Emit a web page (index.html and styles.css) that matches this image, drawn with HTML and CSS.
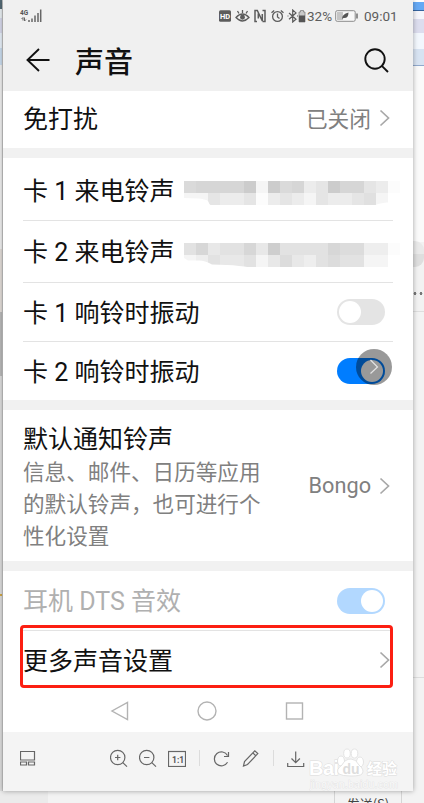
FILE: index.html
```html
<!DOCTYPE html>
<html lang="zh-CN">
<head>
  <meta charset="UTF-8">
  <meta name="viewport" content="width=device-width, initial-scale=1.0">
  <title>声音</title>
  <link rel="stylesheet" href="styles.css">
</head>

<body>
  <div class="desktop">
    <div class="desk-left"></div>

    <div class="viewer">
      <div class="top">
        <div class="status">
          <svg class="signal" width="24" height="14" viewBox="0 0 24 14">
            <text x="2" y="5.500" class="net">4G</text>
            <path d="M5 11.500V8.500L3.500 10M6.500 8.500v3.500L8 10.500" fill="none" stroke="#666" stroke-width="1"/>
            <path d="M11 11v2M14 9.500v3.500M17 6.500v6.500M20 4v9M22.700 .5v12.500" stroke="#666" stroke-width="1.500"/>
          </svg>
          <svg class="icons" width="88" height="14" viewBox="0 0 88 14">
            <rect x="1" y="1.300" width="12" height="11.500" rx="1.500" fill="#5c5c5c"/>
            <text x="2" y="9.800" class="hd">HD</text>
            <g fill="none" stroke="#5c5c5c" stroke-width="1.300">
              <path d="M18 8.500Q24.500 1.500 31 8.500Q24.500 15.500 18 8.500ZM24.500 1v3M19.500 2l1.500 2.500M29.500 2L28 4.500"/>
              <circle cx="24.500" cy="8.300" r="1.800" fill="#5c5c5c"/>
              <path d="M39 12.500h-2V1.500h2.300l5 10.500V5M40.300 9.500V4.500M44.500 1.500h2.500v11h-2.500" stroke-width="1.500"/>
              <circle cx="59.500" cy="7.500" r="4.900"/>
              <path d="M59.500 4.500v3.500l2 1.500M53.500 3.700l2.700-2.300M65.500 3.700l-2.700-2.300"/>
              <path d="M71 4l7 6.200-3.300 2.800V1L78 3.900 71 10.200M69.500 7h1M79 7h1" stroke-width="1.200"/>
            </g>
            <path d="M82.500 1.500h3v1.500h1.500v10h-6V3h1.500z" fill="#c9c9c9" stroke="#777" stroke-width=".7"/>
            <path d="M81 6.500h6V13h-6z" fill="#555"/>
          </svg>
          <span class="percent">32%</span>
          <svg class="battery" width="24" height="14" viewBox="0 0 24 14">
            <rect x=".7" y="1.700" width="19.500" height="10.600" rx="1.500" fill="#f8f8f8" stroke="#8b8b8b"/>
            <path d="M2 3h6v8H2z" fill="#c5c5c5"/>
            <path d="M22 4.500v5" stroke="#777" stroke-width="1.600"/>
            <path d="M7 10q0-5 6.500-6.500Q13.500 9.500 8.500 9z" fill="#555"/>
          </svg>
          <span class="clock">09:01</span>
        </div>
        <div class="title-bar">
          <svg class="back" width="24" height="24" viewBox="0 0 24 24">
            <path d="M13 1L1.500 12 13 23M1.500 12h22" fill="none" stroke="#111" stroke-width="1.900"/>
          </svg>
          <h1>声音</h1>
          <svg class="search" width="25" height="25" viewBox="0 0 25 25">
            <circle cx="11" cy="11" r="9.700" fill="none" stroke="#111" stroke-width="1.900"/>
            <path d="M17.800 17.800l6.200 6.200" stroke="#111" stroke-width="1.900"/>
          </svg>
        </div>
      </div>

      <div class="group">
        <div class="row dnd">
          <span class="label">免打扰</span>
          <span class="value">已关闭</span>
          <svg class="arrow" width="11" height="18" viewBox="0 0 11 18"><path d="M1.500 1.500L9.500 9l-8 7.500"/></svg>
        </div>
      </div>

      <div class="group">
        <div class="row ring-1">
          <span class="label">卡 1 来电铃声</span>
          <svg class="mosaic" width="216" height="26" viewBox="0 0 216 26">
            <clipPath id="smear-1"><path d="M0 0H216V21Q200 21 194 23Q188 26 180 26H32Q26 26 24 20Q21 18 14 17.500L0 17z"/></clipPath>
            <g clip-path="url(#smear-1)" shape-rendering="crispEdges">
              <path fill="#dadada" d="M0 0h12v12H0zM96 0h12v12H96z"/>
              <path fill="#d6d6d6" d="M12 0h48v12H12zM108 0h12v12h-12zM156 0h24v12h-24z"/>
              <path fill="#ccc" d="M60 0h12v12H60zM144 0h12v12h-12zM84 0h12v12H84z"/>
              <path fill="#f5f5f5" d="M72 0h12v12H72zM0 12h24v12H0zM120 12h12v12h-12zM192 12h12v12h-12z"/>
              <path fill="#ececec" d="M120 0h12v12h-12zM192 0h12v12h-12zM36 12h24v12H36zM84 12h12v12H84zM108 12h12v12h-12zM144 12h24v12h-24z"/>
              <path fill="#e5e5e5" d="M132 0h12v12h-12zM180 0h12v12h-12zM24 12h12v12H24zM60 12h12v12H60zM96 12h12v12H96zM132 12h12v12h-12zM168 12h12v12h-12z"/>
              <path fill="#e0e0e0" d="M180 12h12v12h-12z"/>
              <path fill="#fcfcfc" d="M204 0h12v12h-12zM72 12h12v12H72z"/>
            </g>
          </svg>
        </div>
        <div class="row line ring-2">
          <span class="label">卡 2 来电铃声</span>
          <svg class="mosaic" width="216" height="26" viewBox="0 0 216 26">
            <clipPath id="smear-2"><path d="M0 0H216V26H72Q60 22 28 21.500Q20 17 14 17.500H4L0 15z"/></clipPath>
            <g clip-path="url(#smear-2)" shape-rendering="crispEdges">
              <path fill="#e2e2e2" d="M0 0h12v12H0zM36 0h24v12H36zM96 0h48v12H96zM24 12h12v12H24zM60 12h12v12H60zM132 12h48v12h-48z"/>
              <path fill="#d7d7d7" d="M12 0h12v12H12zM60 0h12v12H60zM144 0h12v12h-12z"/>
              <path fill="#cecece" d="M84 0h12v12H84z"/>
              <path fill="#dcdcdc" d="M156 0h24v12h-24zM96 12h12v12H96zM144 12h12v12h-12z"/>
              <path fill="#e8e8e8" d="M24 0h12v12H24zM72 0h12v12H72zM36 12h24v12H36zM84 12h12v12H84zM108 12h12v12h-12z"/>
              <path fill="#eee" d="M180 0h24v12h-24zM12 12h12v12H12zM120 12h12v12h-12z"/>
              <path fill="#f5f5f5" d="M0 12h12v12H0zM72 12h12v12H72zM180 12h24v12h-24z"/>
              <path fill="#fcfcfc" d="M204 0h12v12h-12z"/>
            </g>
          </svg>
        </div>
        <div class="row line vibrate-1">
          <span class="label">卡 1 响铃时振动</span>
          <span class="switch"></span>
        </div>
        <div class="row line vibrate-2">
          <span class="label">卡 2 响铃时振动</span>
          <span class="switch on"></span>
          <span class="float-ball">
            <svg width="11" height="16" viewBox="0 0 11 16"><path d="M1.500 1L8.500 8l-7 6.500" fill="none" stroke="#e4e4e4" stroke-width="1.200"/></svg>
          </span>
        </div>
      </div>

      <div class="group">
        <div class="row notice">
          <div class="label">
            默认通知铃声
            <p>信息、邮件、日历等应用<br>的默认铃声，也可进行个<br>性化设置</p>
          </div>
          <span class="value">Bongo</span>
          <svg class="arrow" width="11" height="18" viewBox="0 0 11 18"><path d="M1.500 1.500L9.500 9l-8 7.500"/></svg>
        </div>
      </div>

      <div class="group last">
        <div class="row dts">
          <span class="label">耳机 DTS 音效</span>
          <span class="switch on off-state"></span>
        </div>
        <div class="row line more">
          <span class="label">更多声音设置</span>
          <svg class="arrow" width="11" height="18" viewBox="0 0 11 18"><path d="M1.500 1.500L9.500 9l-8 7.500"/></svg>
          <span class="red-box"></span>
        </div>
        <div class="nav">
          <svg width="20" height="20" viewBox="0 0 20 20"><path d="M17.500 1.500v17L2 10z"/></svg>
          <svg width="20" height="20" viewBox="0 0 20 20"><circle cx="10" cy="10" r="9"/></svg>
          <svg width="20" height="20" viewBox="0 0 20 20"><rect x="2.500" y="2" width="16" height="16"/></svg>
        </div>
      </div>

      <div class="toolbar">
        <svg class="thumbs" width="18" height="18" viewBox="0 0 18 18"><path d="M.5 2.500h14v8.500H.5zM.5 13h6v3h-6zM8.500 13h6v3h-6z"/></svg>
        <svg width="18" height="18" viewBox="0 0 18 18"><circle cx="7.700" cy="8.500" r="7.200"/><path d="M5 8.500h5.400M7.700 5.800v5.400M12.800 13.600l4.200 4"/></svg>
        <svg width="18" height="18" viewBox="0 0 18 18"><circle cx="7.700" cy="8.500" r="7.200"/><path d="M5 8.500h5.400M12.800 13.600l4.200 4"/></svg>
        <svg width="18" height="18" viewBox="0 0 18 18"><rect x=".5" y="2.500" width="17" height="15"/><text x="4" y="13.500" class="ratio">1:1</text></svg>
        <i class="sep"></i>
        <svg width="18" height="18" viewBox="0 0 18 18"><path d="M14.500 13.300A7 7 0 1 1 14.500 6.500M15.500 3v4.500H11"/></svg>
        <svg width="18" height="18" viewBox="0 0 18 18"><path d="M1.500 17l1-4.500L12.800 1.800l3 2.800L5.500 15.500zM10.800 3.900l3 2.800"/></svg>
        <i class="sep"></i>
        <svg width="18" height="18" viewBox="0 0 18 18"><path d="M.7 14v3.500h16V14M8.700 2.500v11M4.500 9.500l4.200 4.200 4.200-4.200"/></svg>

        <svg class="watermark" width="94" height="44" viewBox="0 0 94 44">
          <text x="3" y="28" textLength="30" class="bai">Bai</text>
          <g fill="#fff" stroke="#ddd" stroke-width=".8">
            <ellipse cx="35" cy="14" rx="3.500" ry="5"/>
            <ellipse cx="41" cy="6.500" rx="3.300" ry="4.500"/>
            <ellipse cx="48.500" cy="6.500" rx="3.300" ry="4.500"/>
            <ellipse cx="54" cy="15" rx="3.500" ry="5"/>
            <path d="M45 12q5 0 8 6q6 5 3 9q-2 2-11 2t-12-2q-4-4 3-9q3-6 9-6z"/>
          </g>
          <text x="36.500" y="27" class="du">du</text>
          <text x="61" y="27" textLength="30" class="exp">经验</text>
          <text x="4" y="41" textLength="88" class="url">jingyan.baidu.com</text>
        </svg>
      </div>
    </div>

    <div class="desk-right">
      <span class="smudge"></span>
      <span class="dots"></span>
    </div>
  </div>
  <div class="desk-bottom">
    <span class="send">发送(S)</span>
  </div>
</body>
</html>
```
FILE: styles.css
```css
* {
  box-sizing: border-box;
}

body {
  margin: 0;
  width: 424px;
  height: 803px;
  overflow: hidden;
  font-family: Roboto, "Noto Sans CJK SC", sans-serif;
  background-color: #f3f3f3;
}

svg {
  display: block;
  flex: none;
}

.desktop {
  display: flex;
  height: 791px;
}

.desk-left {
  width: 3px;
  border-right: 1px solid #c8c8c8;
  background: linear-gradient(#536974 0 9px, #e8eef2 9px 18px, #d6d8ea 18px 33px, #e6eff8 33px 48px, #c9dbed 48px 65px, #eee 65px 249px, #e2dcd8 249px 312px, #b9b9b9 312px 376px, #dcdcdc 376px 594px, #d1a747 594px 596px, #dcdcdc 596px);
}

.viewer {
  position: relative;
  width: 410px;
  display: flex;
  flex-direction: column;
  background-color: #f1f1f1;
  box-shadow: 0 0 5px rgba(0, 0, 0, .35);
  z-index: 1;
}

.desk-right {
  flex: 1;
  background: linear-gradient(#fff 0 2px, #65a9f5 2px 10px, #34639e 10px 11px, #f5f5fb 11px 19px, #dcddee 19px 33px, #f2f7fd 33px 49px, #d7e3f2 49px 65px, #91a9cc 65px 66px, #fafafa 66px 242px, #f2f2f2 242px 311px, #dedede 311px 312px, #f3f3f3 312px 677px, #ddd 677px 678px, #f3f3f3 678px);
}

.smudge {
  display: block;
  width: 11px;
  height: 26px;
  margin-top: 241px;
  background: linear-gradient(#e9e9e9 50%, #dedede 50%);
  border-radius: 0 9px 9px 0;
}

.dots {
  display: block;
  width: 11px;
  height: 3px;
  margin-top: 25px;
  background: radial-gradient(circle, #777 1.3px, transparent 1.6px) -1px 0 / 6px 3px;
}

.desk-bottom {
  height: 12px;
  display: flex;
  overflow: hidden;
  background: linear-gradient(90deg, #ebebeb 48px, #f3f3f3 48px);
}

.send {
  width: 68px;
  height: 30px;
  margin-left: 334px;
  border: 1px solid #d5d5d5;
  border-width: 0 1px;
  font: 13px/20px "Noto Sans CJK SC", sans-serif;
  padding-top: 3px;
  text-align: center;
  color: #444;
}

/* header */
.top {
  height: 91px;
  background-color: #f0f0f0;
}

.status {
  display: flex;
  align-items: center;
  height: 32px;
  padding-left: 15px;
  font-size: 13.500px;
  color: #5c5c5c;
}

.net {
  font: bold 6.5px Roboto;
  fill: #555;
}

.hd {
  font: bold 7.5px Roboto;
  fill: #fff;
}

.icons {
  margin-left: 176px;
}

.percent {
  width: 26px;
  margin-left: 1px;
}

.battery {
  margin: 0 5px 0 2px;
}

.title-bar {
  display: flex;
  align-items: center;
  height: 56px;
  padding: 0 24px 0 23px;
}

h1 {
  flex: 1;
  margin: 5px 0 0 25px;
  font-size: 29px;
  line-height: 40px;
  font-weight: 500;
  color: #111;
}

/* settings list */
.group {
  margin-bottom: 10px;
  background-color: #fff;
}

.group.last {
  flex: 1;
  margin-bottom: 0;
}

.row {
  position: relative;
  display: flex;
  align-items: center;
  margin: 0 20px;
}

.line {
  border-top: 1px solid #e3e3e3;
}

.dnd {
  height: 57px;
}

.ring-1, .ring-2 {
  height: 62px;
}

.vibrate-1 {
  height: 59px;
}

.vibrate-2 {
  height: 59px;
}

.label {
  flex: none;
  padding-top: 3px;
  font-size: 25px;
  line-height: 32px;
  color: #111;
  white-space: nowrap;
}

.dnd .label {
  padding-top: 0;
}

.row > .label + .value,
.row > .label + .switch,
.row > .label + .arrow {
  margin-left: auto;
}

.value {
  font-size: 21.700px;
  color: #808080;
}

.dnd .value {
  margin-top: -4px;
}

.dnd .arrow {
  margin-top: -4px;
}

.arrow {
  margin: 0 3px 0 8px;
  fill: none;
  stroke: #a8a8a8;
  stroke-width: 1.700;
}

.mosaic {
  margin: 8px -40px 0 10px;
}

.ring-1 {
  padding-top: 2px;
}

.switch {
  width: 48px;
  height: 26px;
  margin-right: 8px;
  padding: 2px;
  border-radius: 13px;
  background-color: #e4e4e4;
}

.switch::after {
  content: '';
  display: block;
  width: 22px;
  height: 22px;
  border-radius: 50%;
  background-color: #fff;
}

.switch.on {
  background-color: #007dff;
}

.switch.on::after {
  margin-left: auto;
}

.switch.off-state {
  background-color: #b2d8ff;
}

.float-ball {
  position: absolute;
  top: 7px;
  right: 1px;
  display: grid;
  place-items: center;
  width: 36px;
  height: 36px;
  border-radius: 50%;
  background-color: rgba(0, 0, 0, .4);
}

.notice {
  height: 151px;
}

.notice .label {
  padding-top: 6px;
}

.notice p {
  margin: 1px 0 0;
  font-size: 21.600px;
  line-height: 31.700px;
  color: #808080;
}

.dts {
  height: 59px;
}

.dts .label {
  color: #b0b0b0;
}

.more {
  height: 59px;
}

.more .label {
  padding-top: 4px;
}

.red-box {
  position: absolute;
  top: -6px;
  left: -3px;
  width: 373px;
  height: 63px;
  border: 3px solid #fc1f12;
  border-radius: 4px;
}

.nav {
  display: flex;
  justify-content: center;
  gap: 67px;
  padding: 12px 2px 0 0;
  fill: none;
  stroke: #b3b3b3;
  stroke-width: 1.400;
}

/* picture viewer toolbar */
.toolbar {
  position: relative;
  display: flex;
  align-items: center;
  gap: 11px;
  height: 59px;
  padding: 0 0 7px 17px;
  background-color: #f4f4f4;
  fill: none;
  stroke: #666;
  stroke-width: 1.200;
}

.thumbs {
  margin-right: 61px;
}

.sep {
  width: 1px;
  height: 16px;
  margin: 0 2px;
  background-color: #dcdcdc;
}

.ratio {
  font: bold 8.5px Roboto;
  fill: #555;
  stroke: none;
}

.watermark {
  position: absolute;
  top: 15px;
  left: 303px;
}

.watermark text {
  fill: #fff;
  stroke: #dcdcdc;
  stroke-width: 1;
  paint-order: stroke;
}

.bai {
  font: bold 20px "Liberation Sans";
}

.watermark .du {
  font: bold 14px "Liberation Sans";
  fill: #ddd;
  stroke: none;
}

.exp {
  font: bold 15px "Noto Sans CJK SC";
}

.watermark .url {
  font: 10.500px "Liberation Sans";
  fill: #fafafa;
  stroke-width: .6;
}
```
